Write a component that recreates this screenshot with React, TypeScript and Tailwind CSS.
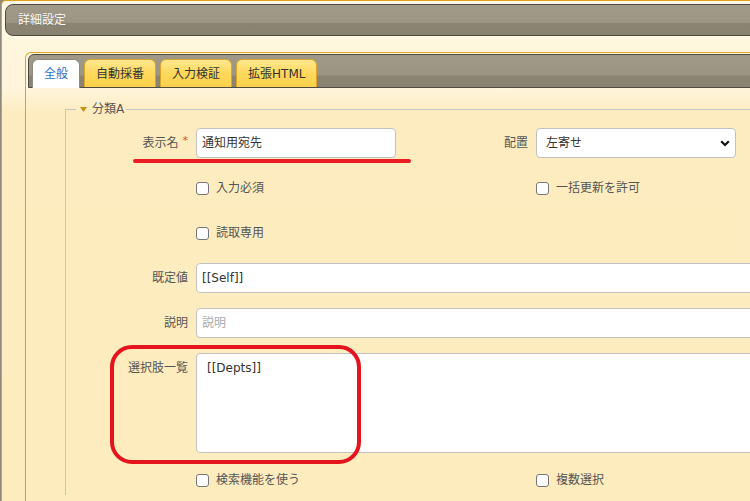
import { ReactNode } from 'react';

const tabs = ['全般', '自動採番', '入力検証', '拡張HTML'];

function Checkbox({ label }: { label: string }) {
  return (
    <div className="flex items-center gap-[7px]">
      <span className="block w-[13px] h-[13px] rounded-[3px] border border-[#767676] bg-white" />
      <span className="text-[12px] leading-[16px] text-[#555]">{label}</span>
    </div>
  );
}

function Label({ children, required }: { children: ReactNode; required?: boolean }) {
  return (
    <div className="w-[122px] shrink-0 h-[30px] flex items-center justify-end text-[12px] text-[#555]">
      <span>{children}</span>
      {required && <span className="ml-[4px] text-[11px] text-[#e0453f] relative -top-[2px]">*</span>}
    </div>
  );
}

const inputCls =
  'h-[30px] ml-[8px] bg-white border border-[#c2c2c2] rounded-[4px] flex items-center pl-[5px] text-[12px] text-[#333]';

export default function App() {
  return (
    <div className="relative w-[750px] h-[501px] overflow-hidden bg-[#8e8a7e] font-['DejaVu_Sans','Noto_Sans_CJK_JP',sans-serif]">
      {/* dialog */}
      <div className="ml-[1px] w-[1000px] h-[501px] border-t border-l border-[#dfa21d] rounded-tl-[5px] bg-[linear-gradient(to_bottom,#fff8e6_0px,#fff6de_45px,#fff5dc_88px,#fdecbf_112px,#fdecbe_100%)]">
        {/* title bar */}
        <div className="mt-[3px] ml-[3px] h-[32px] border border-[#4d4a40] rounded-l-[8px] flex items-center pl-[12px] bg-[linear-gradient(to_bottom,#a19a89_0%,#9c9584_58%,#8c8472_62%,#8a8270_100%)]">
          <span className="text-[12px] text-white [text-shadow:0_0_1px_rgba(0,0,0,0.3)]">詳細設定</span>
        </div>

        {/* tab panel */}
        <div className="mt-[16px] ml-[23px] h-[460px] border-t border-l border-[#dca228] rounded-tl-[6px]">
          <div className="mt-[1px] ml-[2px] h-[34px] border border-[#4d4a40] rounded-tl-[6px] flex items-end pl-[3px] gap-[4px] bg-[linear-gradient(to_bottom,#a09988_0%,#9c9584_62%,#8c8472_66%,#8a8270_100%)]">
            {tabs.map((t, i) =>
              i === 0 ? (
                <div
                  key={t}
                  className="relative -mb-px h-[29px] px-[11px] flex items-center bg-white border border-b-0 border-[#8f8b80] rounded-t-[6px] text-[12px] text-[#1f74c6]"
                >
                  {t}
                </div>
              ) : (
                <div
                  key={t}
                  className="h-[28px] px-[11px] flex items-center border border-b-0 border-[#dba52c] rounded-t-[6px] text-[12px] text-[#333] bg-[linear-gradient(to_bottom,#ffe890_0%,#fed85c_50%,#fdd04a_100%)]"
                >
                  {t}
                </div>
              )
            )}
          </div>

          {/* fieldset */}
          <fieldset className="ml-[39px] mt-[13px] border-t border-l border-[#c4c4c4] p-0 m-0">
            <legend className="ml-[10px] px-[4px] pr-[2px] flex items-center h-[16px] text-[12px] text-[#555]">
              <svg width="7" height="5" viewBox="0 0 7 5" className="mr-[5px]">
                <polygon points="0,0 7,0 3.5,5" fill="#c88f16" />
              </svg>
              <span>分類A</span>
            </legend>

            <div className="pt-[11px] flex flex-col">
              {/* row 1 */}
              <div className="flex">
                <div className="w-[340px] flex items-center">
                  <Label required>表示名</Label>
                  <div className={`${inputCls} w-[200px]`}>通知用宛先</div>
                </div>
                <div className="w-[340px] flex items-center">
                  <Label>配置</Label>
                  <div className={`${inputCls} w-[200px] pl-[9px] pr-[5px] justify-between`}>
                    <span>左寄せ</span>
                    <svg width="10" height="7" viewBox="0 0 10 7">
                      <polyline points="1.2,1.2 5,5 8.8,1.2" fill="none" stroke="#111" strokeWidth="2.2" />
                    </svg>
                  </div>
                </div>
              </div>

              {/* row 2 */}
              <div className="flex mt-[15px] h-[30px] items-center">
                <div className="w-[340px] pl-[130px]">
                  <Checkbox label="入力必須" />
                </div>
                <div className="w-[340px] pl-[130px]">
                  <Checkbox label="一括更新を許可" />
                </div>
              </div>

              {/* row 3 */}
              <div className="flex mt-[15px] h-[30px] items-center">
                <div className="w-[340px] pl-[130px]">
                  <Checkbox label="読取専用" />
                </div>
              </div>

              {/* row 4 */}
              <div className="flex mt-[15px] items-center">
                <Label>既定値</Label>
                <div className={`${inputCls} w-[800px]`}>[[Self]]</div>
              </div>

              {/* row 5 */}
              <div className="flex mt-[15px] items-center">
                <Label>説明</Label>
                <div className={`${inputCls} w-[800px] text-[#aaa]`}>説明</div>
              </div>

              {/* row 6 */}
              <div className="flex mt-[15px] items-start">
                <Label>選択肢一覧</Label>
                <div className="ml-[8px] w-[800px] h-[100px] bg-white border border-[#c2c2c2] rounded-[4px] pl-[10px] pt-[6px] text-[12px] leading-[16px] text-[#333]">
                  [[Depts]]
                </div>
              </div>

              {/* row 7 */}
              <div className="flex mt-[12px] h-[30px] items-center">
                <div className="w-[340px] pl-[130px]">
                  <Checkbox label="検索機能を使う" />
                </div>
                <div className="w-[340px] pl-[130px]">
                  <Checkbox label="複数選択" />
                </div>
              </div>
            </div>
          </fieldset>
        </div>
      </div>

      {/* red annotations */}
      <div className="absolute left-[133px] top-[159px] w-[278px] h-[4px] rounded-full bg-[#ec1c24]" />
      <div className="absolute left-[110px] top-[345px] w-[251px] h-[119px] border-[4px] border-[#e4131d] rounded-[22px]" />
    </div>
  );
}
